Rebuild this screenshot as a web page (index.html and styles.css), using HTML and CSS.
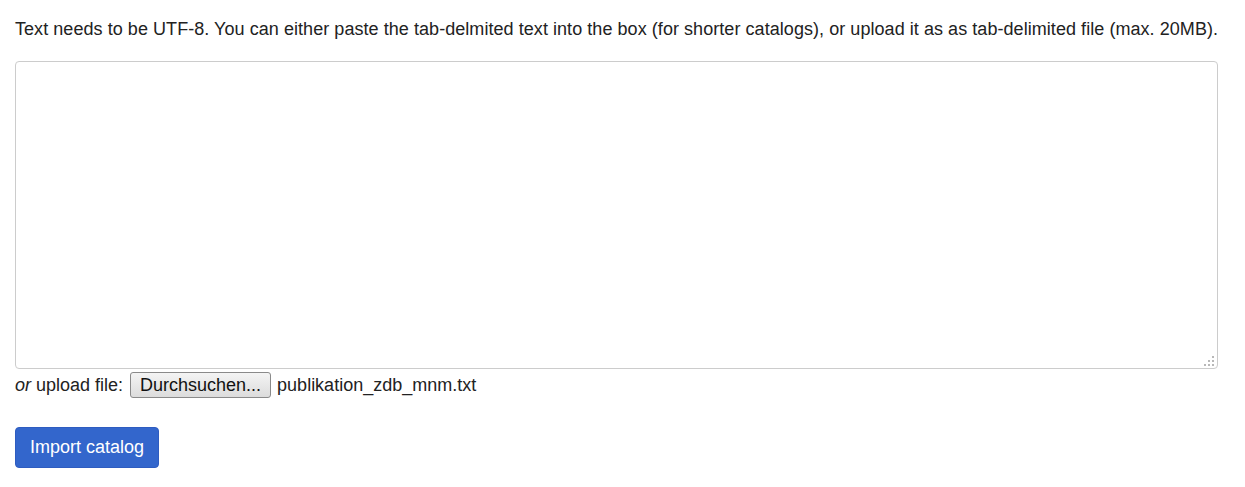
FILE: index.html
```html
<!DOCTYPE html>
<html>
<head>
<meta charset="utf-8">
<link rel="stylesheet" href="styles.css">
</head>
<body>
<div class="page">
  <p class="intro">Text needs to be UTF-8. You can either paste the tab-delmited text into the box (for shorter catalogs), or upload it as as tab-delimited file (max. 20MB).</p>
  <div class="area-wrap">
    <textarea class="catalog"></textarea>
    <svg class="grip" width="12" height="12" viewBox="0 0 12 12">
      <g fill="#b8b8b8">
        <rect x="9" y="1" width="2" height="2"/>
        <rect x="5" y="5" width="2" height="2"/>
        <rect x="9" y="5" width="2" height="2"/>
        <rect x="1" y="9" width="2" height="2"/>
        <rect x="5" y="9" width="2" height="2"/>
        <rect x="9" y="9" width="2" height="2"/>
      </g>
    </svg>
  </div>
  <div class="upload">
    <span><em>or</em> upload file:</span>
    <button class="browse" type="button">Durchsuchen...</button>
    <span class="filename">publikation_zdb_mnm.txt</span>
  </div>
  <div class="actions">
    <button class="import" type="button">Import catalog</button>
  </div>
</div>
</body>
</html>
```
FILE: styles.css
```css
html, body {
  margin: 0;
  padding: 0;
  background: #fff;
}
body {
  font-family: "Liberation Sans", Arial, sans-serif;
  font-size: 18px;
  color: #222;
}
.page {
  padding: 0 15px 0 15px;
}
.intro {
  margin: 0;
  padding-top: 18px;
  line-height: 22px;
  height: 43px;
  white-space: nowrap;
  letter-spacing: 0.055px;
}
.area-wrap {
  position: relative;
  width: 1203px;
  height: 308px;
}
.catalog {
  display: block;
  box-sizing: border-box;
  width: 1203px;
  height: 308px;
  margin: 0;
  border: 1px solid #ccc;
  border-radius: 4px;
  resize: none;
  font-family: inherit;
}
.grip {
  position: absolute;
  right: 3px;
  bottom: 2px;
}
.upload {
  display: flex;
  align-items: center;
  gap: 6px;
  height: 30px;
  margin-top: 1px;
}
.browse {
  font-family: "Liberation Sans", Arial, sans-serif;
  font-size: 18px;
  color: #111;
  height: 26px;
  width: 141px;
  padding: 0 4px;
  border: 1px solid #8a8a8a;
  border-radius: 3px;
  background: linear-gradient(#f4f4f4, #dcdcdc);
  margin-left: 1px;
}
.actions {
  margin-top: 27px;
}
.import {
  font-family: "Liberation Sans", Arial, sans-serif;
  font-size: 18px;
  color: #fff;
  background: #3366cc;
  border: 1px solid #2e5cc0;
  border-radius: 4px;
  width: 144px;
  height: 41px;
  padding: 0;
}
```
